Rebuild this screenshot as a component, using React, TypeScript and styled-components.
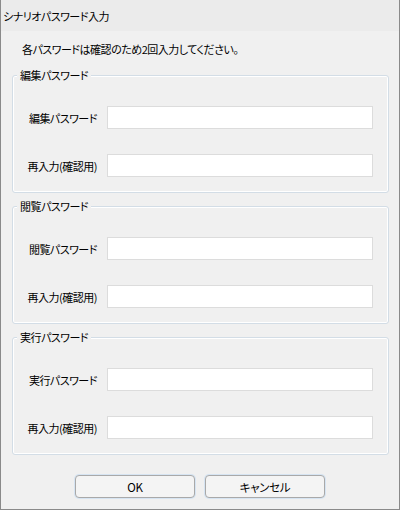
import React from "react";
import styled, { createGlobalStyle } from "styled-components";

const Global = createGlobalStyle`
  html, body { margin: 0; padding: 0; background: #f0f0f0; }
  * { box-sizing: border-box; }
  body {
    font-family: "Noto Sans CJK JP", "Noto Sans", sans-serif;
    font-size: 11px;
    letter-spacing: -0.5px;
    color: #000;
    font-feature-settings: "palt";
  }
`;

const Window = styled.div`
  width: 400px;
  height: 510px;
  border: 1px solid #8a8a8a;
  border-top: none;
  background: #f0f0f0;
  display: flex;
  flex-direction: column;
`;

const TitleBar = styled.div`
  height: 31px;
  flex: none;
  background: #ebebeb;
  display: flex;
  align-items: center;
  padding: 0 0 0 2px;
  line-height: 16px;
`;

const Body = styled.div`
  flex: 1;
  display: flex;
  flex-direction: column;
  padding: 10px 10px 0 11px;
`;

const Intro = styled.p`
  margin: 0 0 10px 10px;
  line-height: 16px;
`;

const Group = styled.fieldset`
  margin: 0 0 5px 0;
  padding: 23px 14px 15px 0;
  border: 1px solid #d3dde6;
  border-radius: 3px;
  box-shadow: inset 0 0 0 1px #ffffff;
  display: grid;
  grid-template-columns: 84px 266px;
  column-gap: 10px;
  row-gap: 25px;
  align-items: center;
`;

const Legend = styled.legend`
  margin-left: 4px;
  padding: 0 3px;
  line-height: 16px;
  background: #f0f0f0;
`;

const Label = styled.label`
  text-align: right;
  white-space: nowrap;
  line-height: 16px;
`;

const Input = styled.input`
  height: 23px;
  width: 266px;
  border: 1px solid #dcdcdc;
  background: #fff;
  outline: none;
  padding: 0 4px;
  font: inherit;
`;

const ButtonRow = styled.div`
  display: flex;
  justify-content: center;
  gap: 10px;
  margin-top: 15px;
  margin-left: -1px;
`;

const Button = styled.button`
  width: 120px;
  height: 23px;
  border: 1px solid #a9a9a9;
  border-radius: 4px;
  background: #f4f4f4;
  box-shadow: 0 0 0 1px #d6e4f2;
  font-family: "Noto Sans CJK JP", "Noto Sans", sans-serif;
  font-feature-settings: "palt";
  font-size: 11.5px;
  letter-spacing: -0.3px;
  color: #000;
  padding: 0;
`;

type GroupDef = { title: string; label: string };

const groups: GroupDef[] = [
  { title: "編集パスワード", label: "編集パスワード" },
  { title: "閲覧パスワード", label: "閲覧パスワード" },
  { title: "実行パスワード", label: "実行パスワード" },
];

export default function App() {
  return (
    <>
      <Global />
      <Window>
        <TitleBar>シナリオパスワード入力</TitleBar>
        <Body>
          <Intro>各パスワードは確認のため2回入力してください。</Intro>
          {groups.map((g) => (
            <Group key={g.title}>
              <Legend>{g.title}</Legend>
              <Label>{g.label}</Label>
              <Input type="password" />
              <Label>再入力(確認用)</Label>
              <Input type="password" />
            </Group>
          ))}
          <ButtonRow>
            <Button>OK</Button>
            <Button>キャンセル</Button>
          </ButtonRow>
        </Body>
      </Window>
    </>
  );
}
